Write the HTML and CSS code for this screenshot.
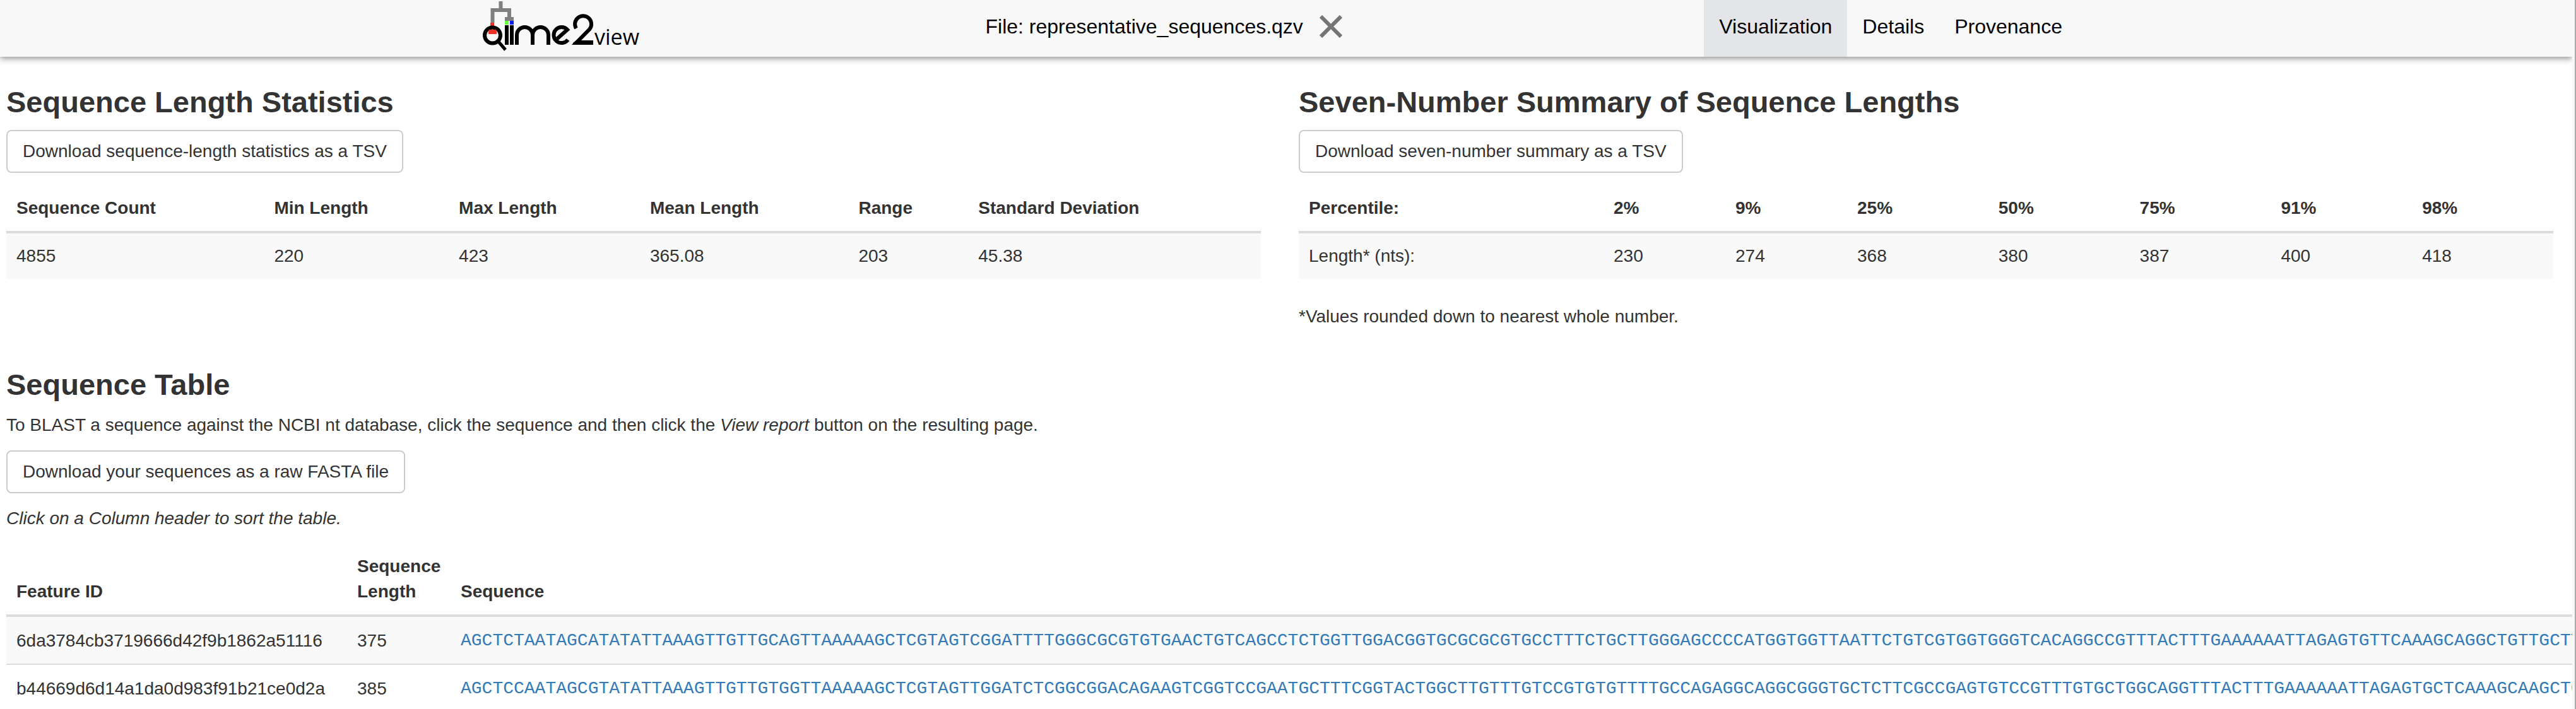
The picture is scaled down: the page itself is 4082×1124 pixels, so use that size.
FILE: index.html
```html
<!DOCTYPE html>
<html lang="en">
<head>
<meta charset="utf-8">
<title>QIIME 2 View</title>
<link rel="stylesheet" href="styles.css">
</head>
<body>
<header class="topbar">
  <div class="topbar-inner">
    <a class="logo" href="#" aria-label="qiime2view">
      <svg width="254" height="90" viewBox="14 0 254 90" aria-hidden="true">
        <path d="M47.500 2v12M34.500 36V16h26.500v12" fill="none" stroke="#808080" stroke-width="6"/>
        <path d="M54 27h14v6H54z" fill="#808080"/>
        <path d="M31 36h6v6h-6z" fill="#ee3124"/>
        <path d="M54 33h6v6h-6z" fill="#6f4"/>
        <path d="M62 33h6v6h-6z" fill="#0a1cf5"/>
        <circle cx="34.500" cy="56" r="12.500" fill="#f8f8f8" stroke="#000" stroke-width="6"/>
        <path d="M29 47h11l1 3v4H28v-4z" fill="#ee3124"/>
        <path d="M43 65l12 14" stroke="#000" stroke-width="5" fill="none"/>
        <path d="M57 40v31M65 40v31M73 71V55.500a12.500 12.500 0 0 1 25 0V71M98 71V55.500a12.500 12.500 0 0 1 25 0V71" stroke="#000" stroke-width="6" fill="none"/>
        <path d="M134 64l19-17a12.500 12.500 0 1 0 1 16" stroke="#000" stroke-width="6" fill="none"/>
        <path d="M167 45a13 13 0 1 1 21.500 1L167 68h27" stroke="#000" stroke-width="6" fill="none"/>
        <path d="M162 71v-3l5-4h27v7z"/>
        <text class="logo-text" x="196" y="71">view</text>
      </svg>
    </a>
    <div class="file">
      <span>File: representative_sequences.qzv</span>
      <button class="close" type="button" aria-label="Close file">
        <svg width="36" height="36" viewBox="0 0 36 36" aria-hidden="true"><path d="M2 2l32 32M34 2L2 34" stroke="#757575" stroke-width="6"/></svg>
      </button>
    </div>
    <nav class="tabs">
      <a class="tab tab-active" href="#">Visualization</a>
      <a class="tab" href="#">Details</a>
      <a class="tab" href="#">Provenance</a>
    </nav>
  </div>
</header>
<main class="page">
  <div class="summary">
    <section>
      <h1>Sequence Length Statistics</h1>
      <button class="btn" type="button">Download sequence-length statistics as a TSV</button>
      <table class="table">
        <thead><tr><th>Sequence Count</th><th>Min Length</th><th>Max Length</th><th>Mean Length</th><th>Range</th><th>Standard Deviation</th></tr></thead>
        <tbody><tr><td>4855</td><td>220</td><td>423</td><td>365.08</td><td>203</td><td>45.38</td></tr></tbody>
      </table>
    </section>
    <section>
      <h1>Seven-Number Summary of Sequence Lengths</h1>
      <button class="btn" type="button">Download seven-number summary as a TSV</button>
      <table class="table">
        <colgroup><col class="col-label"><col span="2" class="col-short"></colgroup>
        <thead><tr><th>Percentile:</th><th>2%</th><th>9%</th><th>25%</th><th>50%</th><th>75%</th><th>91%</th><th>98%</th></tr></thead>
        <tbody><tr><td>Length* (nts):</td><td>230</td><td>274</td><td>368</td><td>380</td><td>387</td><td>400</td><td>418</td></tr></tbody>
      </table>
      <p>*Values rounded down to nearest whole number.</p>
    </section>
  </div>
  <section class="sequences">
    <h1>Sequence Table</h1>
    <p>To BLAST a sequence against the NCBI nt database, click the sequence and then click the <em>View report</em> button on the resulting page.</p>
    <button class="btn" type="button">Download your sequences as a raw FASTA file</button>
    <p><em>Click on a Column header to sort the table.</em></p>
    <table class="table seq-table">
      <colgroup><col class="col-id"><col class="col-length"><col></colgroup>
      <thead><tr><th>Feature ID</th><th>Sequence Length</th><th>Sequence</th></tr></thead>
      <tbody>
        <tr><td>6da3784cb3719666d42f9b1862a51116</td><td>375</td><td><a class="seq" href="#">AGCTCTAATAGCATATATTAAAGTTGTTGCAGTTAAAAAGCTCGTAGTCGGATTTTGGGCGCGTGTGAACTGTCAGCCTCTGGTTGGACGGTGCGCGCGTGCCTTTCTGCTTGGGAGCCCCATGGTGGTTAATTCTGTCGTGGTGGGTCACAGGCCGTTTACTTTGAAAAAATTAGAGTGTTCAAAGCAGGCTGTTGCTT</a></td></tr>
        <tr><td>b44669d6d14a1da0d983f91b21ce0d2a</td><td>385</td><td><a class="seq" href="#">AGCTCCAATAGCGTATATTAAAGTTGTTGTGGTTAAAAAGCTCGTAGTTGGATCTCGGCGGACAGAAGTCGGTCCGAATGCTTTCGGTACTGGCTTGTTTGTCCGTGTGTTTTGCCAGAGGCAGGCGGGTGCTCTTCGCCGAGTGTCCGTTTGTGCTGGCAGGTTTACTTTGAAAAAATTAGAGTGCTCAAAGCAAGCTG</a></td></tr>
      </tbody>
    </table>
  </section>
</main>
</body>
</html>
```
FILE: styles.css
```css
* {
  box-sizing: border-box;
}

html {
  overflow: hidden auto;
  border-right: 2px solid #aaa;
  background: #f8f8f8;
}

body {
  margin: 0 4px 0 0;
  overflow-x: hidden;
  background: #fff;
  color: #333;
  font-family: "Liberation Sans", Arial, sans-serif;
  font-size: 28px;
  line-height: 40px;
}

.topbar {
  background: #f8f8f8;
  box-shadow: 0 2px 10px rgba(0, 0, 0, 0.5);
}

.topbar-inner {
  display: flex;
  justify-content: space-between;
  width: 63%;
  margin: 0 auto;
  padding: 0 30px 0 6px;
  color: #000;
  font-size: 32px;
  line-height: 84px;
}

.logo,
.logo svg {
  display: block;
}

.logo-text {
  font-family: "Open Sans", sans-serif;
  font-size: 34px;
}

.file {
  display: flex;
}

.close {
  height: 84px;
  padding: 0 26px;
  border: 0;
  background: none;
}

.close svg {
  display: block;
}

.tabs {
  display: flex;
}

.tab {
  padding: 0 24px 6px;
  color: #000;
  text-decoration: none;
}

.tab-active {
  background: #e4e5e9;
}

.page {
  padding: 46px 0 0 10px;
  overflow: hidden;
}

.summary {
  display: grid;
  grid-template-columns: 1fr 1fr;
  gap: 60px;
  padding-right: 30px;
}

h1 {
  margin: 0 0 18px;
  font-size: 47px;
  line-height: 52px;
}

p {
  margin: 0 0 20px;
}

.btn {
  display: block;
  margin-bottom: 20px;
  padding: 12px 24px;
  border: 2px solid #ccc;
  border-radius: 8px;
  background: #fff;
  color: inherit;
  font: inherit;
}

.table {
  width: 100%;
  margin-bottom: 40px;
  border-collapse: collapse;
}

.table th,
.table td {
  padding: 16px;
  text-align: left;
  vertical-align: bottom;
}

.table thead {
  border-bottom: 4px solid #ddd;
}

.table tbody tr:nth-child(odd) {
  background: #f9f9f9;
}

.table tbody tr + tr {
  border-top: 2px solid #ddd;
}

.col-label {
  width: 483px;
}

.col-short {
  width: 193px;
}

.sequences {
  padding-top: 42px;
}

.seq-table {
  table-layout: fixed;
}

.col-id {
  width: 540px;
}

.col-length {
  width: 164px;
}

.seq {
  color: #337ab7;
  font-family: "Liberation Mono", "Courier New", monospace;
  text-decoration: none;
}
```
